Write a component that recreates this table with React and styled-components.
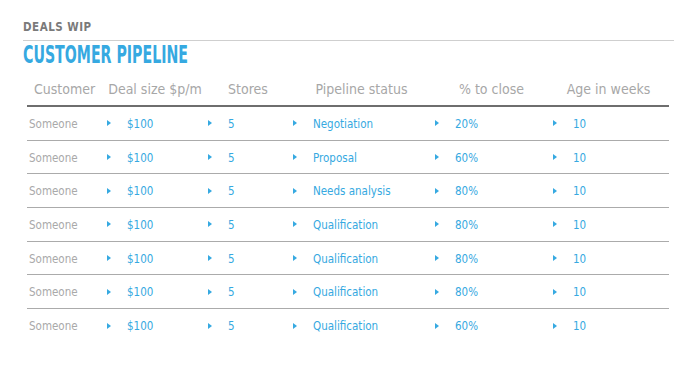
import React from 'react';
import styled, {createGlobalStyle} from 'styled-components';

const GlobalStyle = createGlobalStyle`
  body {
    margin: 0;
    background: #ffffff;
    font-family: "DejaVu Sans Condensed", "DejaVu Sans", sans-serif;
  }
`;

const Page = styled.div`
  width: 696px;
  height: 392px;
  box-sizing: border-box;
  padding: 21px 22px 0 23px;
  background: #fff;
`;

const Kicker = styled.div`
  font-size: 11.5px;
  line-height: 13px;
  font-weight: bold;
  letter-spacing: 0.5px;
  color: #7a7a7a;
  padding-bottom: 6px;
  border-bottom: 1px solid #cfcfcf;
`;

const Title = styled.h1`
  margin: 0;
  font-size: 25px;
  line-height: 28px;
  font-weight: bold;
  color: #36a9e1;
  white-space: nowrap;
  display: inline-block;
  transform: scaleX(0.63);
  transform-origin: left center;
`;

const Table = styled.div`
  margin: 10px 5px 0 4px;
  display: grid;
  grid-template-columns: 80px 101px 85px 142px 118px 1fr;
`;

const HeadCell = styled.div`
  font-size: 14px;
  line-height: 20px;
  color: #a7a7a7;
  text-align: center;
  padding: 0 5px 6px 0;
  border-bottom: 2px solid #6e6e6e;
  white-space: nowrap;
`;

const Cell = styled.div`
  display: flex;
  align-items: center;
  height: 33.7px;
  padding-top: 1px;
  box-sizing: border-box;
  border-bottom: ${p => (p.last ? 'none' : '1px solid #ababab')};
  font-size: 11.5px;
  color: ${p => (p.muted ? '#a9a9a9' : '#36a9e1')};
  padding-left: ${p => (p.muted ? '2px' : '0')};
  white-space: nowrap;
`;

const Arrow = styled.span`
  width: 0;
  height: 0;
  border-left: 4px solid #36a9e1;
  border-top: 3px solid transparent;
  border-bottom: 3px solid transparent;
  margin: 0 16px 1px 0;
`;

const headers = ['Customer', 'Deal size $p/m', 'Stores', 'Pipeline status', '% to close', 'Age in weeks'];

const deals = [
  {status: 'Negotiation', close: '20%'},
  {status: 'Proposal', close: '60%'},
  {status: 'Needs analysis', close: '80%'},
  {status: 'Qualification', close: '80%'},
  {status: 'Qualification', close: '80%'},
  {status: 'Qualification', close: '80%'},
  {status: 'Qualification', close: '60%'},
];

const Value = ({last, children}) => (
  <Cell last={last}>
    <Arrow />
    {children}
  </Cell>
);

const App = () => {
  return (
    <Page>
      <GlobalStyle />
      <Kicker>DEALS WIP</Kicker>
      <Title>CUSTOMER PIPELINE</Title>
      <Table>
        {headers.map(h => (
          <HeadCell key={h}>{h}</HeadCell>
        ))}
        {deals.map((d, i) => {
          const last = i === deals.length - 1;
          return (
            <React.Fragment key={i}>
              <Cell muted last={last}>Someone</Cell>
              <Value last={last}>$100</Value>
              <Value last={last}>5</Value>
              <Value last={last}>{d.status}</Value>
              <Value last={last}>{d.close}</Value>
              <Value last={last}>10</Value>
            </React.Fragment>
          );
        })}
      </Table>
    </Page>
  );
};

export default App;
